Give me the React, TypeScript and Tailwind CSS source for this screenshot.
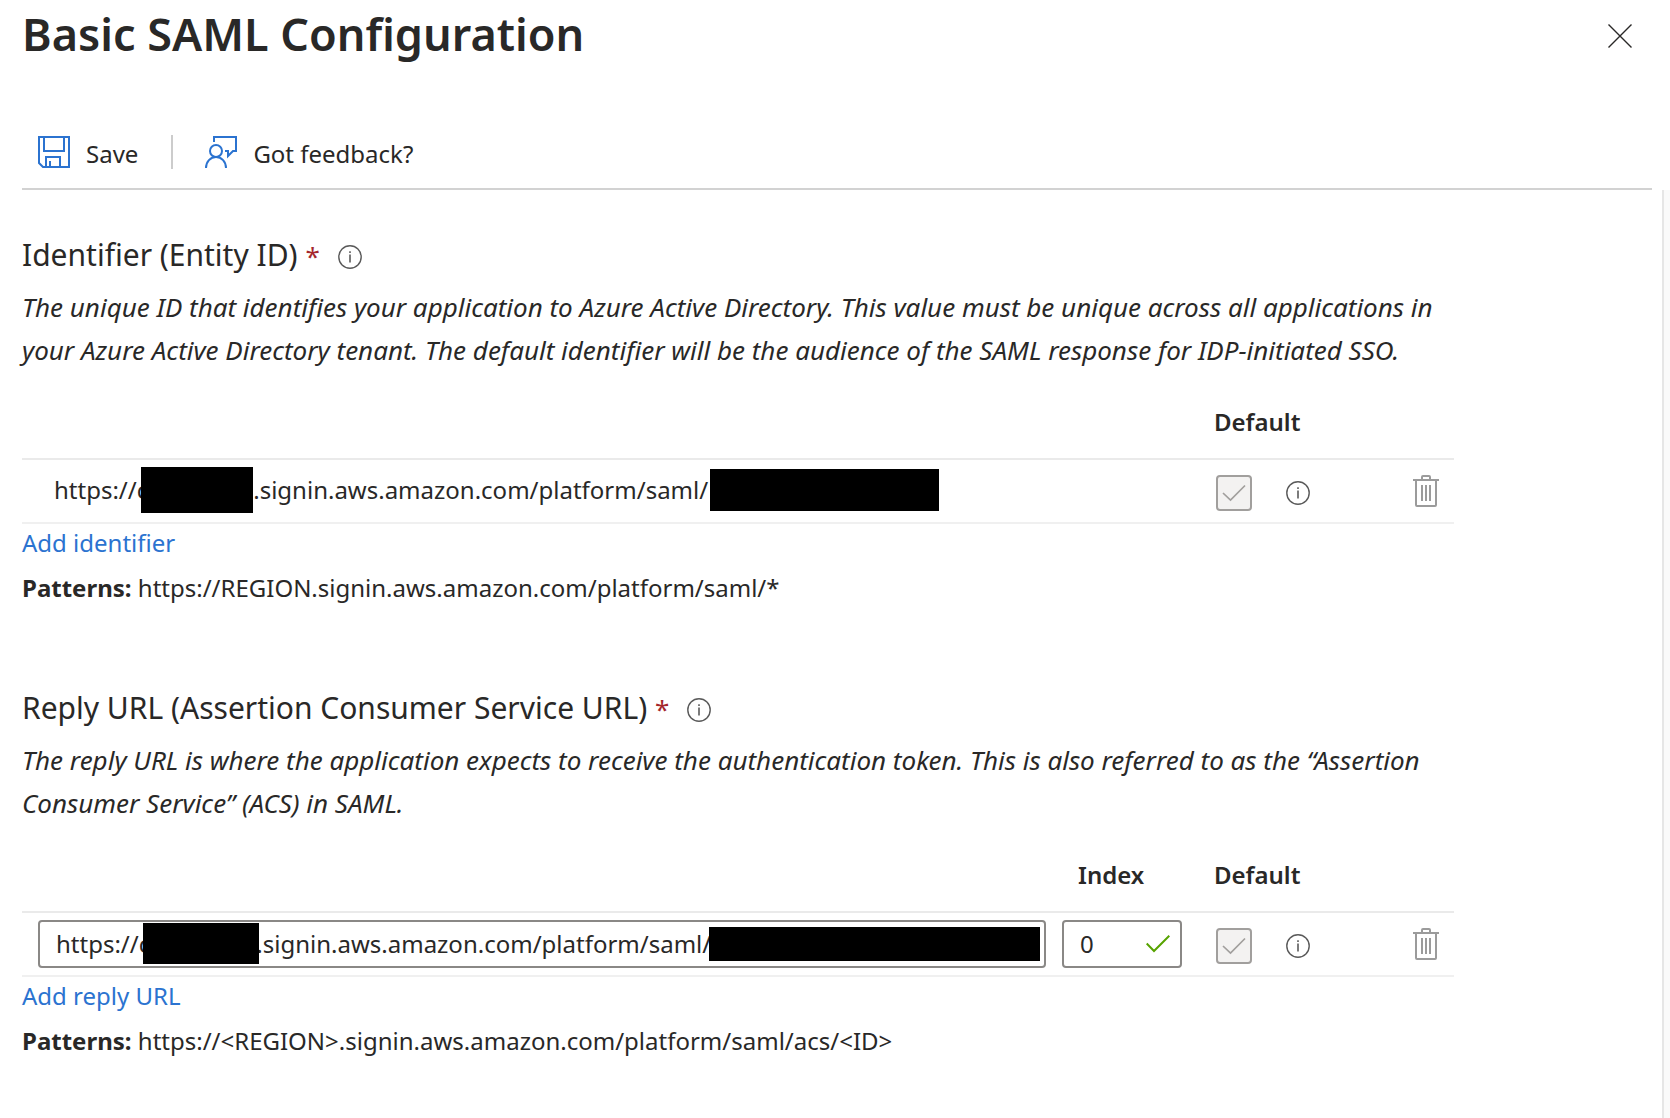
import React, { useState } from "react";

const NB = "\u00a0";
const REPLY_URL = "https://c" + NB.repeat(17) + ".signin.aws.amazon.com/platform/saml/";

function SaveIcon() {
  return (
    <svg width="32" height="32" viewBox="0 0 32 32" fill="none" stroke="#2b73d0" strokeWidth="2" aria-hidden="true">
      <path d="M1 1H31V31H5L1 27Z" />
      <path d="M6 1V15H26V1" />
      <path d="M8 31V21H22V31" />
      <path d="M12 31V25" />
    </svg>
  );
}

function FeedbackIcon() {
  return (
    <svg width="32" height="32" viewBox="0 0 32 32" fill="none" stroke="#2b73d0" strokeWidth="2" aria-hidden="true">
      <circle cx="11" cy="15" r="6" />
      <path d="M1 32C1 25.500 5.500 21 11 21S21 25.500 21 32" />
      <path d="M9 6V1H31V15H28L23 20V15H20" />
    </svg>
  );
}

function InfoButton({ label }: { label: string }) {
  return (
    <button type="button" aria-label={label} className="block shrink-0">
      <svg width="24" height="24" viewBox="0 0 24 24" fill="none" stroke="#5a5a5a" aria-hidden="true">
        <circle cx="12" cy="12" r="11.200" strokeWidth="1.400" />
        <path d="M12 9.500V17.500" strokeWidth="1.600" />
        <path d="M12 6.200V8" strokeWidth="1.600" />
      </svg>
    </button>
  );
}

function DeleteButton({ label }: { label: string }) {
  return (
    <button type="button" aria-label={label} className="block">
      <svg width="26" height="32" viewBox="0 0 26 32" fill="none" stroke="#9b9b9b" strokeWidth="2" aria-hidden="true">
        <path d="M0 5H26" />
        <path d="M9 5V2Q9 1 10 1H16Q17 1 17 2V5" />
        <path d="M3 5V30Q3 31 4 31H22Q23 31 23 30V5" />
        <path d="M9 10V26M13 10V26M17 10V26" />
      </svg>
    </button>
  );
}

function DefaultBox({ label }: { label: string }) {
  return (
    <span className="relative block size-9">
      <input
        type="checkbox"
        checked
        disabled
        readOnly
        aria-label={label}
        className="block size-9 appearance-none rounded-sm border-2 border-[#a19f9d] bg-[#f3f2f1]"
      />
      <svg className="pointer-events-none absolute inset-0" width="36" height="36" viewBox="0 0 36 36" fill="none" stroke="#a19f9d" strokeWidth="1.700" aria-hidden="true">
        <path d="M7 18L14.500 25L29 10.500" />
      </svg>
    </span>
  );
}

function SectionTitle({ children, info }: { children: React.ReactNode; info: string }) {
  return (
    <div className="flex items-center">
      <h2 className="text-[30px] leading-[42px]">
        {children} <span className="text-[26px] text-[#a4262c]">*</span>
      </h2>
      <div className="ml-[18px] pt-0.5">
        <InfoButton label={info} />
      </div>
    </div>
  );
}

function Columns() {
  return (
    <colgroup>
      <col />
      <col className="w-[136px]" />
      <col className="w-[200px]" />
      <col className="w-[64px]" />
    </colgroup>
  );
}

const headCell = "h-[88px] border-b-2 border-[#eaeaea] pb-[18px] text-left align-bottom font-semibold leading-9";
const bodyCell = "h-16 border-b-2 border-[#f0f0f0] p-0 align-middle";

function DefaultCells({ name }: { name: string }) {
  return (
    <>
      <td className={bodyCell}>
        <div className="flex items-center gap-[34px] pt-1 pl-[26px]">
          <DefaultBox label={"Default " + name} />
          <InfoButton label={"About the default " + name} />
        </div>
      </td>
      <td className={bodyCell}>
        <div className="flex justify-end pr-[15px]">
          <DeleteButton label={"Delete " + name} />
        </div>
      </td>
    </>
  );
}

export default function App() {
  const [replyUrl, setReplyUrl] = useState(REPLY_URL);
  const [index, setIndex] = useState("0");

  return (
    <div className="flex min-h-screen flex-col bg-white font-['Noto_Sans',sans-serif] text-[24px] text-[#292827]">
      <header className="pr-[18px] pl-[22px]">
        <div className="flex items-start justify-between pt-1 pr-5">
          <h1 className="text-[45px] leading-[60px] font-semibold">Basic SAML Configuration</h1>
          <button type="button" aria-label="Close" className="mt-5">
            <svg width="24" height="24" viewBox="0 0 24 24" fill="none" stroke="#292827" strokeWidth="1.400" aria-hidden="true">
              <path d="M0.500 0.500L23.500 23.500M23.500 0.500L0.500 23.500" />
            </svg>
          </button>
        </div>
        <div className="mt-[52px] flex h-[74px] items-center border-b-2 border-[#d2d2d2] pl-4">
          <button type="button" className="flex items-center gap-4">
            <SaveIcon />
            <span className="pt-1 leading-9">Save</span>
          </button>
          <span className="mr-8 ml-[33px] h-[34px] w-0.5 bg-[#cccccc]" />
          <button type="button" className="flex items-center gap-4">
            <FeedbackIcon />
            <span className="pt-1 leading-9">Got feedback?</span>
          </button>
        </div>
      </header>

      <div className="flex grow">
        <main className="grow pt-11 pr-[208px] pl-[22px]">
          <section>
            <SectionTitle info="About the identifier">Identifier (Entity ID)</SectionTitle>
            <p className="mt-[9px] text-[26px] leading-[43px] italic">
              The unique ID that identifies your application to Azure Active Directory. This value must be unique across all applications in your Azure Active Directory tenant. The default identifier will be the audience of the SAML response for IDP-initiated SSO.
            </p>
            <table className="w-full table-fixed border-separate border-spacing-0">
              <Columns />
              <thead>
                <tr>
                  <th className={headCell} />
                  <th className={headCell} />
                  <th scope="col" className={headCell}>
                    <span className="pl-6">Default</span>
                  </th>
                  <th className={headCell} />
                </tr>
              </thead>
              <tbody>
                <tr>
                  <td className={bodyCell} colSpan={2}>
                    <div className="flex items-center pb-[3px] pl-8 leading-9">
                      <span>https://c</span>
                      <span className="-ml-[7px] h-[46px] w-28 bg-black" />
                      <span className="pr-0.5">.signin.aws.amazon.com/platform/saml/</span>
                      <span className="h-[42px] w-[229px] bg-black" />
                    </div>
                  </td>
                  <DefaultCells name="identifier" />
                </tr>
              </tbody>
            </table>
            <a href="#add-identifier" className="block w-fit leading-[38px] text-[#2b73d0]">Add identifier</a>
            <p className="mt-[7px] leading-[38px]">
              <b className="font-bold">Patterns:</b> https://REGION.signin.aws.amazon.com/platform/saml/*
            </p>
          </section>

          <section className="mt-20">
            <SectionTitle info="About the reply URL">Reply URL (Assertion Consumer Service URL)</SectionTitle>
            <p className="mt-[9px] text-[26px] leading-[43px] italic">
              The reply URL is where the application expects to receive the authentication token. This is also referred to as the “Assertion Consumer Service” (ACS) in SAML.
            </p>
            <table className="w-full table-fixed border-separate border-spacing-0">
              <Columns />
              <thead>
                <tr>
                  <th className={headCell} />
                  <th scope="col" className={headCell}>
                    <span className="pl-6">Index</span>
                  </th>
                  <th scope="col" className={headCell}>
                    <span className="pl-6">Default</span>
                  </th>
                  <th className={headCell} />
                </tr>
              </thead>
              <tbody>
                <tr>
                  <td className={bodyCell}>
                    <div className="relative mr-2 ml-4">
                      <input
                        type="text"
                        aria-label="Reply URL"
                        value={replyUrl}
                        onChange={(e) => setReplyUrl(e.target.value)}
                        className="block h-12 w-full rounded-sm border-2 border-[#8a8886] px-4 pb-0.5"
                      />
                      <span className="absolute top-[3px] left-[105px] h-[41px] w-[116px] bg-black" />
                      <span className="absolute top-[7px] right-1.5 h-[34px] w-[331px] bg-black" />
                    </div>
                  </td>
                  <td className={bodyCell}>
                    <div className="relative mx-2">
                      <input
                        type="text"
                        aria-label="Index"
                        value={index}
                        onChange={(e) => setIndex(e.target.value)}
                        className="block h-12 w-full rounded-sm border-2 border-[#8a8886] px-4 pb-0.5"
                      />
                      <svg className="pointer-events-none absolute top-[15px] right-3" width="24" height="18" viewBox="0 0 24 18" fill="none" stroke="#57a300" strokeWidth="2" aria-hidden="true">
                        <path d="M0.700 8.500L8 16L23.300 0.700" />
                      </svg>
                    </div>
                  </td>
                  <DefaultCells name="reply URL" />
                </tr>
              </tbody>
            </table>
            <a href="#add-reply-url" className="block w-fit leading-[38px] text-[#2b73d0]">Add reply URL</a>
            <p className="mt-[7px] leading-[38px]">
              <b className="font-bold">Patterns:</b> {"https://<REGION>.signin.aws.amazon.com/platform/saml/acs/<ID>"}
            </p>
          </section>
        </main>
        <div className="w-2 shrink-0 border-l-2 border-[#e6e6e6] bg-[#fafafa]" />
      </div>
    </div>
  );
}
